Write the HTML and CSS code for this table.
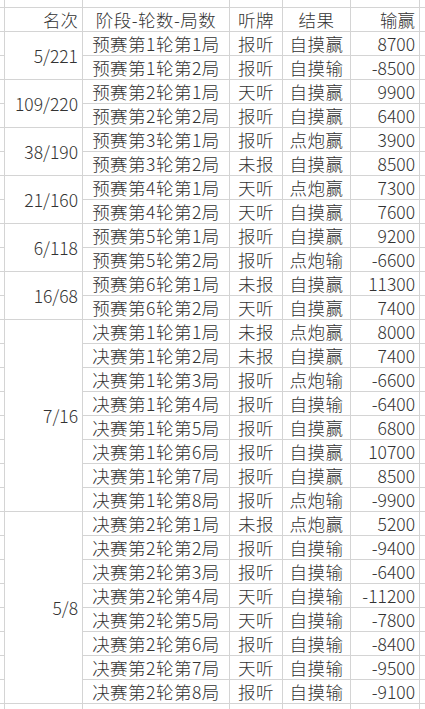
FILE: index.html
```html
<!DOCTYPE html>
<html lang="zh-CN">
<head>
<meta charset="utf-8">
<title>成绩</title>
<link rel="stylesheet" href="styles.css">
</head>
<body>
<div class="sheet">
  <div class="e"></div><div class="e"></div><div class="e"></div><div class="e"></div><div class="e"></div><div class="e"></div><div class="e"></div>

  <div class="e"></div><div class="c r">名次</div><div class="c m">阶段-轮数-局数</div><div class="c m">听牌</div><div class="c m">结果</div><div class="c r">输赢</div><div class="e"></div>

  <div class="e"></div><div class="c r rk s2">5/221</div><div class="c m">预赛第1轮第1局</div><div class="c m">报听</div><div class="c m">自摸赢</div><div class="c r">8700</div><div class="e"></div>
  <div class="e"></div><div class="c m">预赛第1轮第2局</div><div class="c m">报听</div><div class="c m">自摸输</div><div class="c r">-8500</div><div class="e"></div>

  <div class="e"></div><div class="c r rk s2">109/220</div><div class="c m">预赛第2轮第1局</div><div class="c m">天听</div><div class="c m">自摸赢</div><div class="c r">9900</div><div class="e"></div>
  <div class="e"></div><div class="c m">预赛第2轮第2局</div><div class="c m">报听</div><div class="c m">自摸赢</div><div class="c r">6400</div><div class="e"></div>

  <div class="e"></div><div class="c r rk s2">38/190</div><div class="c m">预赛第3轮第1局</div><div class="c m">报听</div><div class="c m">点炮赢</div><div class="c r">3900</div><div class="e"></div>
  <div class="e"></div><div class="c m">预赛第3轮第2局</div><div class="c m">未报</div><div class="c m">自摸赢</div><div class="c r">8500</div><div class="e"></div>

  <div class="e"></div><div class="c r rk s2">21/160</div><div class="c m">预赛第4轮第1局</div><div class="c m">天听</div><div class="c m">点炮赢</div><div class="c r">7300</div><div class="e"></div>
  <div class="e"></div><div class="c m">预赛第4轮第2局</div><div class="c m">天听</div><div class="c m">自摸赢</div><div class="c r">7600</div><div class="e"></div>

  <div class="e"></div><div class="c r rk s2">6/118</div><div class="c m">预赛第5轮第1局</div><div class="c m">报听</div><div class="c m">自摸赢</div><div class="c r">9200</div><div class="e"></div>
  <div class="e"></div><div class="c m">预赛第5轮第2局</div><div class="c m">报听</div><div class="c m">点炮输</div><div class="c r">-6600</div><div class="e"></div>

  <div class="e"></div><div class="c r rk s2">16/68</div><div class="c m">预赛第6轮第1局</div><div class="c m">未报</div><div class="c m">自摸赢</div><div class="c r">11300</div><div class="e"></div>
  <div class="e"></div><div class="c m">预赛第6轮第2局</div><div class="c m">天听</div><div class="c m">自摸赢</div><div class="c r">7400</div><div class="e"></div>

  <div class="e"></div><div class="c r rk s8">7/16</div><div class="c m">决赛第1轮第1局</div><div class="c m">未报</div><div class="c m">点炮赢</div><div class="c r">8000</div><div class="e"></div>
  <div class="e"></div><div class="c m">决赛第1轮第2局</div><div class="c m">未报</div><div class="c m">自摸赢</div><div class="c r">7400</div><div class="e"></div>
  <div class="e"></div><div class="c m">决赛第1轮第3局</div><div class="c m">报听</div><div class="c m">点炮输</div><div class="c r">-6600</div><div class="e"></div>
  <div class="e"></div><div class="c m">决赛第1轮第4局</div><div class="c m">报听</div><div class="c m">自摸输</div><div class="c r">-6400</div><div class="e"></div>
  <div class="e"></div><div class="c m">决赛第1轮第5局</div><div class="c m">报听</div><div class="c m">自摸赢</div><div class="c r">6800</div><div class="e"></div>
  <div class="e"></div><div class="c m">决赛第1轮第6局</div><div class="c m">报听</div><div class="c m">自摸赢</div><div class="c r">10700</div><div class="e"></div>
  <div class="e"></div><div class="c m">决赛第1轮第7局</div><div class="c m">报听</div><div class="c m">自摸赢</div><div class="c r">8500</div><div class="e"></div>
  <div class="e"></div><div class="c m">决赛第1轮第8局</div><div class="c m">报听</div><div class="c m">点炮输</div><div class="c r">-9900</div><div class="e"></div>

  <div class="e"></div><div class="c r rk s8">5/8</div><div class="c m">决赛第2轮第1局</div><div class="c m">未报</div><div class="c m">点炮赢</div><div class="c r">5200</div><div class="e"></div>
  <div class="e"></div><div class="c m">决赛第2轮第2局</div><div class="c m">报听</div><div class="c m">自摸输</div><div class="c r">-9400</div><div class="e"></div>
  <div class="e"></div><div class="c m">决赛第2轮第3局</div><div class="c m">报听</div><div class="c m">自摸输</div><div class="c r">-6400</div><div class="e"></div>
  <div class="e"></div><div class="c m">决赛第2轮第4局</div><div class="c m">天听</div><div class="c m">自摸输</div><div class="c r">-11200</div><div class="e"></div>
  <div class="e"></div><div class="c m">决赛第2轮第5局</div><div class="c m">天听</div><div class="c m">自摸输</div><div class="c r">-7800</div><div class="e"></div>
  <div class="e"></div><div class="c m">决赛第2轮第6局</div><div class="c m">报听</div><div class="c m">自摸输</div><div class="c r">-8400</div><div class="e"></div>
  <div class="e"></div><div class="c m">决赛第2轮第7局</div><div class="c m">天听</div><div class="c m">自摸输</div><div class="c r">-9500</div><div class="e"></div>
  <div class="e"></div><div class="c m">决赛第2轮第8局</div><div class="c m">报听</div><div class="c m">自摸输</div><div class="c r">-9100</div><div class="e"></div>

  <div class="e"></div><div class="e"></div><div class="e"></div><div class="e"></div><div class="e"></div><div class="e"></div><div class="e"></div>
</div>
</body>
</html>
```

FILE: styles.css
```css
html, body {
  margin: 0;
  padding: 0;
  background: #ffffff;
}

.sheet {
  display: grid;
  grid-template-columns: 4px 77px 146px 52px 67px 68px 1fr;
  grid-template-rows: 7px repeat(29, 23px) 10px;
  gap: 1px;
  background: #d4d4d4;
  width: 425px;
  height: 709px;
  overflow: hidden;
  font-family: "Noto Sans CJK SC", "Noto Sans", sans-serif;
  font-size: 17.5px;
  font-weight: 300;
  color: #333333;
}

.e {
  background: #ffffff;
}

.c {
  background: #ffffff;
  display: flex;
  align-items: center;
  white-space: nowrap;
  overflow: hidden;
  line-height: 20px;
}

.m {
  justify-content: center;
  letter-spacing: 0.5px;
}

.r {
  justify-content: flex-end;
  padding-right: 4px;
}

.s2 {
  grid-row: span 2;
}

.s8 {
  grid-row: span 8;
}
```
